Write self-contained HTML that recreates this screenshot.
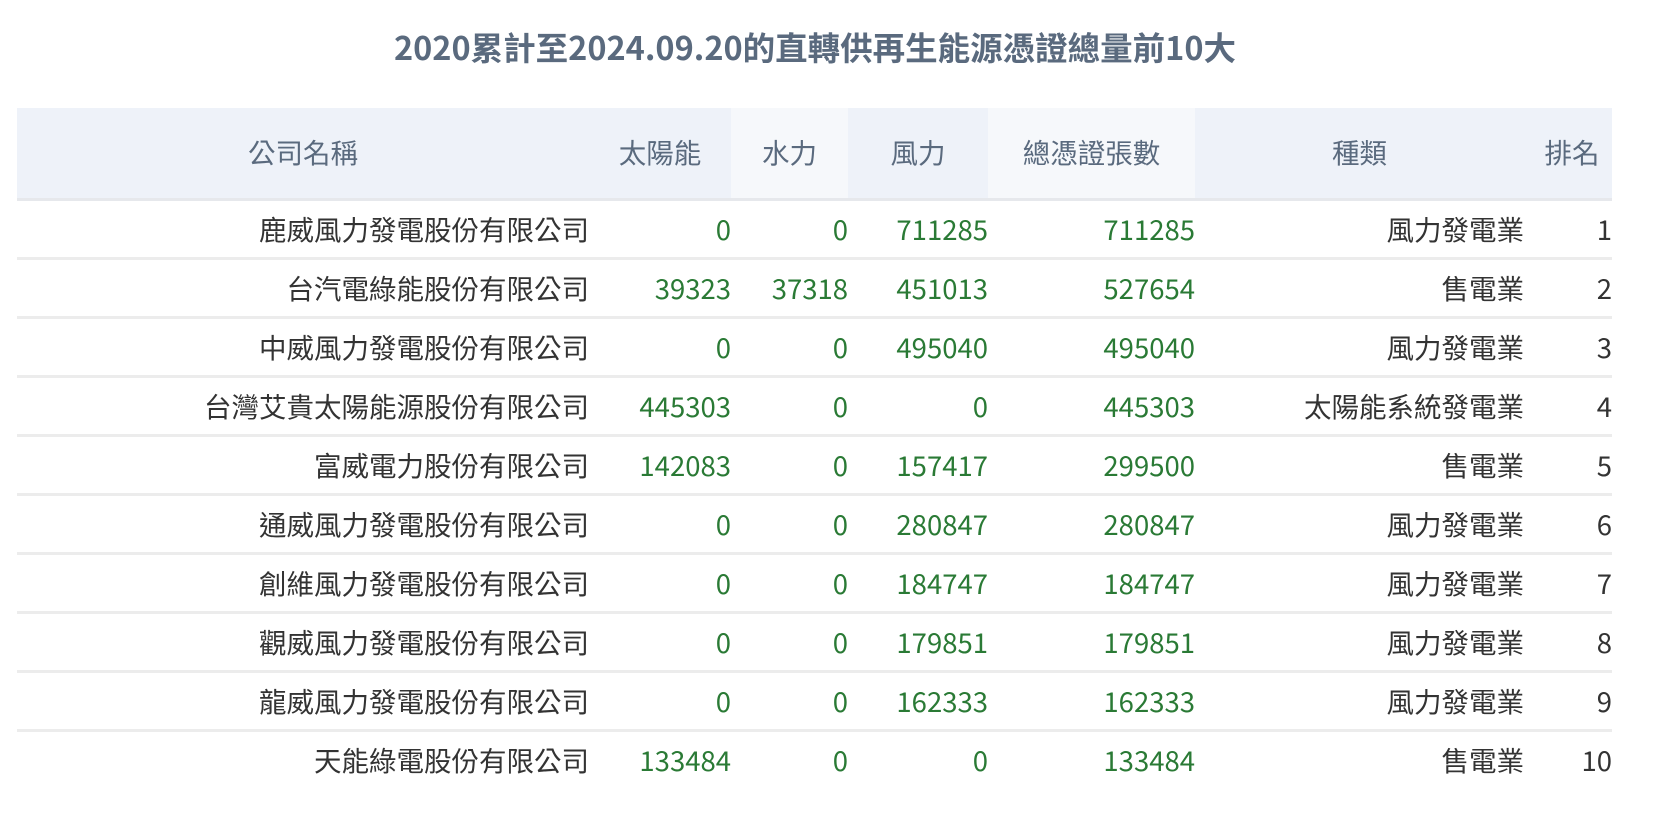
<!DOCTYPE html>
<html><head><meta charset="utf-8"><style>
html,body{margin:0;padding:0;background:#fff;width:1672px;height:818px;overflow:hidden}
body{font-family:"Noto Sans CJK TC","Liberation Sans",sans-serif}
h1{position:absolute;left:-21px;width:1672px;top:27px;margin:0;text-align:center;font-size:32.5px;font-weight:bold;color:#5a6a7e;line-height:40px}
table{position:absolute;left:17px;top:108px;border-collapse:collapse;table-layout:fixed;width:1595px}
th{height:86px;font-weight:normal;font-size:27.5px;line-height:32px;color:#5a6a7e;text-align:center;padding:0 0 4px 0;border-bottom:3px solid #e6e8ec}
th.d{background:#eef2f9}th.l{background:#f6f8fb}
td{height:53px;font-size:27.5px;line-height:32px;text-align:right;padding:0 0 3px 0;border-bottom:3px solid #ececec;color:#333}
td.n{color:#2a7a35}
</style></head><body>
<h1>2020累計至2024.09.20的直轉供再生能源憑證總量前10大</h1>
<table>
<colgroup><col style="width:572px"><col style="width:142px"><col style="width:117px"><col style="width:140px"><col style="width:207px"><col style="width:329px"><col style="width:88px"></colgroup>
<tr><th class="d">公司名稱</th><th class="d">太陽能</th><th class="l">水力</th><th class="d">風力</th><th class="l">總憑證張數</th><th class="d">種類</th><th class="d" style="padding-left:8px">排名</th></tr>
<tr><td>鹿威風力發電股份有限公司</td><td class="n">0</td><td class="n">0</td><td class="n">711285</td><td class="n">711285</td><td>風力發電業</td><td>1</td></tr>
<tr><td>台汽電綠能股份有限公司</td><td class="n">39323</td><td class="n">37318</td><td class="n">451013</td><td class="n">527654</td><td>售電業</td><td>2</td></tr>
<tr><td>中威風力發電股份有限公司</td><td class="n">0</td><td class="n">0</td><td class="n">495040</td><td class="n">495040</td><td>風力發電業</td><td>3</td></tr>
<tr><td>台灣艾貴太陽能源股份有限公司</td><td class="n">445303</td><td class="n">0</td><td class="n">0</td><td class="n">445303</td><td>太陽能系統發電業</td><td>4</td></tr>
<tr><td>富威電力股份有限公司</td><td class="n">142083</td><td class="n">0</td><td class="n">157417</td><td class="n">299500</td><td>售電業</td><td>5</td></tr>
<tr><td>通威風力發電股份有限公司</td><td class="n">0</td><td class="n">0</td><td class="n">280847</td><td class="n">280847</td><td>風力發電業</td><td>6</td></tr>
<tr><td>創維風力發電股份有限公司</td><td class="n">0</td><td class="n">0</td><td class="n">184747</td><td class="n">184747</td><td>風力發電業</td><td>7</td></tr>
<tr><td>觀威風力發電股份有限公司</td><td class="n">0</td><td class="n">0</td><td class="n">179851</td><td class="n">179851</td><td>風力發電業</td><td>8</td></tr>
<tr><td>龍威風力發電股份有限公司</td><td class="n">0</td><td class="n">0</td><td class="n">162333</td><td class="n">162333</td><td>風力發電業</td><td>9</td></tr>
<tr><td style="border-bottom:none">天能綠電股份有限公司</td><td class="n" style="border-bottom:none">133484</td><td class="n" style="border-bottom:none">0</td><td class="n" style="border-bottom:none">0</td><td class="n" style="border-bottom:none">133484</td><td style="border-bottom:none">售電業</td><td style="border-bottom:none">10</td></tr>
</table>
</body></html>
